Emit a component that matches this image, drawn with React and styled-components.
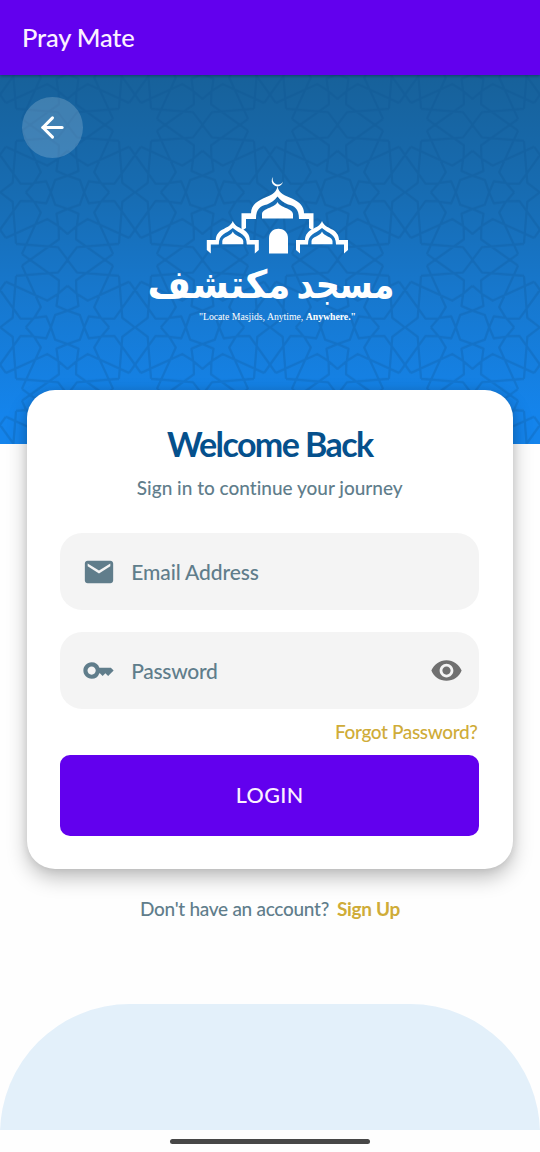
import React from "react";
import styled, { createGlobalStyle } from "styled-components";
import { MdEmail, MdKey, MdVisibility } from "react-icons/md";
import { ArrowLeft } from "lucide-react";

const GlobalStyle = createGlobalStyle`
  *, *::before, *::after { box-sizing: border-box; }
  body { margin: 0; background: #fefefe; }
  button, input { font: inherit; border: 0; padding: 0; background: none; }
`;

const Screen = styled.div`
  width: 540px;
  height: 1152px;
  display: flex;
  flex-direction: column;
  overflow: hidden;
  background: #fefefe;
  font-family: Lato, "Noto Sans", sans-serif;
  font-variant-ligatures: none;
`;

const AppBar = styled.header`
  height: 75px;
  flex: none;
  display: flex;
  align-items: center;
  padding: 0 0 2px 22px;
  background: #6200ee;
  color: #fbf0ff;
  box-shadow: 0 1px 3px rgba(0, 0, 0, 0.35);
  position: relative;
  z-index: 1;
`;

const Text = styled.span`
  font-size: ${(p) => p.$size}px;
  line-height: ${(p) => p.$line || p.$size}px;
  font-weight: ${(p) => p.$weight || 500};
  letter-spacing: ${(p) => p.$track || 0}px;
  color: ${(p) => p.$color || "inherit"};
  white-space: pre;
`;

const Hero = styled.section`
  height: 369px;
  flex: none;
  position: relative;
  display: flex;
  flex-direction: column;
  padding: 22px 22px 0;
  background: linear-gradient(#17619a 0%, #176cb2 32%, #1777cc 58%, #1484ec 92%, #1484ec 100%);
`;

const PatternLayer = styled.svg`
  position: absolute;
  inset: 0;
  width: 100%;
  height: 100%;
`;

const BackButton = styled.button`
  width: 61px;
  height: 61px;
  border-radius: 50%;
  display: grid;
  place-items: center;
  background: rgba(255, 255, 255, 0.18);
  color: #fff;
  position: relative;
`;

const Logo = styled.svg`
  width: 280px;
  height: 160px;
  flex: none;
  margin: 12px 0 0 109px;
  position: relative;
`;

const Card = styled.form`
  width: 485.5px;
  height: 479px;
  flex: none;
  margin: -54.5px 0 0 27px;
  padding: 35.5px 33px 0;
  border-radius: 28px;
  background: #fff;
  box-shadow: 0 9px 20px rgba(0, 0, 0, 0.25), 0 0 9px rgba(0, 0, 0, 0.1);
  display: flex;
  flex-direction: column;
  align-items: center;
  position: relative;
`;

const Headings = styled.div`
  height: 108px;
  flex: none;
  display: flex;
  flex-direction: column;
  align-items: center;
  gap: 13px;
`;

const Fields = styled.div`
  display: flex;
  flex-direction: column;
  gap: 22px;
`;

const Field = styled.label`
  width: 419px;
  height: 77px;
  flex: none;
  padding: 0 16px 0 22px;
  border-radius: 22px;
  background: #f4f4f4;
  color: #607d8b;
  display: flex;
  align-items: center;
`;

const FieldIcon = styled.span`
  width: 33px;
  margin-right: 16px;
  display: grid;
  place-items: center;
`;

const RevealIcon = styled.span`
  display: grid;
  margin-left: auto;
  color: #707070;
`;

const ForgotRow = styled.div`
  align-self: stretch;
  display: flex;
  justify-content: flex-end;
  padding-right: 2px;
  margin-top: 11px;
`;

const LoginButton = styled.button`
  width: 419px;
  height: 81px;
  margin-top: 11px;
  border-radius: 10px;
  background: #6200ee;
  color: #fbf0ff;
  display: grid;
  place-items: center;
  padding-bottom: 1px;
`;

const SignUpRow = styled.div`
  display: flex;
  justify-content: center;
  gap: 8px;
  margin-top: 28px;
`;

const Footer = styled.div`
  height: 126px;
  margin-top: auto;
  flex: none;
  overflow: hidden;
`;

const FooterShape = styled.div`
  height: 140px;
  border-radius: 130px 130px 0 0;
  background: #e3f0fa;
`;

const GestureBar = styled.div`
  height: 22px;
  flex: none;
  display: grid;
  place-items: center;
`;

const GestureHandle = styled.div`
  width: 200px;
  height: 5px;
  border-radius: 3px;
  background: #474747;
`;

// Girih tile geometry: a 405-unit square with a twelve-pointed rosette on each corner.
const polar = (r, deg) => [
  r * Math.cos((deg * Math.PI) / 180),
  r * Math.sin((deg * Math.PI) / 180),
];
const rotate = ([x, y], deg) => {
  const [c, s] = polar(1, deg);
  return [x * c - y * s, x * s + y * c];
};
const toPath = (points) =>
  "M" + points.map(([x, y]) => `${x.toFixed(1)} ${y.toFixed(1)}`).join("L");

function rosette(cx, cy) {
  const lines = [];
  for (let k = 0; k < 12; k++) {
    const shoulder = k % 3 === 0 ? [174, 38] : [184, 35];
    for (const side of [1, -1]) {
      const pts = [polar(68, 45 * side), [shoulder[0], shoulder[1] * side], [203, 0]];
      lines.push(
        toPath(
          pts.map((p) => {
            const [x, y] = rotate(p, k * 30);
            return [x + cx, y + cy];
          })
        )
      );
    }
  }
  return lines.join("");
}

function centre() {
  const base = [
    [[0, -125], [-28, -101], [-33, -64], [0, -50], [33, -64], [28, -101], [0, -125]],
    [[0, -50], [-37, -37], [-50, 0]],
  ];
  return [0, 90, 180, 270]
    .flatMap((a) =>
      base.map((line) =>
        toPath(line.map((p) => rotate(p, a).map((v) => v + 202.5)))
      )
    )
    .join("");
}

const GIRIH =
  [[0, 0], [405, 0], [0, 405], [405, 405]].map(([x, y]) => rosette(x, y)).join("") +
  centre();

function Girih() {
  return (
    <PatternLayer aria-hidden="true">
      <defs>
        <pattern
          id="girih"
          width="405"
          height="405"
          patternUnits="userSpaceOnUse"
          patternTransform="translate(0 49.8) scale(0.33333)"
        >
          <path d={GIRIH} fill="none" stroke="#0b4f8c" strokeWidth="7" strokeLinejoin="round" />
        </pattern>
      </defs>
      <rect width="100%" height="100%" fill="url(#girih)" opacity="0.23" />
    </PatternLayer>
  );
}

function SideDome({ x }) {
  return (
    <g transform={`translate(${x} 0)`}>
      <path d="M0 221C2 226 6 227 9 229C14 231 17 235 17 240H26V250L22 253.5V244.5H14C14 234 7 234 0 228C-7 234-14 234-14 244.5H-22V253.5L-26 250V240H-17C-17 235-14 231-9 229C-6 227-2 226 0 221Z" />
      <path d="M0 231.5C2 237 10 236 10.5 241V244.3H-10.5V241C-10 236-2 237 0 231.5Z" />
    </g>
  );
}

function MosqueLogo() {
  return (
    <Logo viewBox="131 170 280 160" fill="#fff">
      <path d="M273.2 176.8A5.7 5.7 0 1 0 283 181.5A5 5 0 0 1 273.2 176.8Z" />
      <path d="M277.5 186C278.5 194 286 196 292 198.5C300 202 304 207 304 213.3H313.5V231L309 228V219H299C299 208 294 206 288 204.5C284 203 280 200 277.5 196.5C275 200 271 203 267 204.5C261 206 256 208 256 219H246V228L241.5 231V213.3H251C251 207 255 202 263 198.5C269 196 276.5 194 277.5 186Z" />
      <path d="M277.5 202C280 208 292.5 208 293 214V218.5H262V214C262.5 208 275 208 277.5 202Z" />
      <path d="M269 253.5V238C269 225.5 288 225.5 288 238V253.5Z" />
      <SideDome x={322} />
      <SideDome x={232.8} />
      <g fontFamily='"DejaVu Sans", sans-serif' fontWeight="700" fontSize="39" textAnchor="middle">
        <text x="345.5" y="298" direction="rtl" textLength="98" lengthAdjust="spacingAndGlyphs">
          مسجد
        </text>
        <text x="219" y="298" direction="rtl" textLength="143" lengthAdjust="spacingAndGlyphs">
          مكتشف
        </text>
      </g>
      <text
        x="199"
        y="319.5"
        fontFamily='"Liberation Serif", serif'
        fontSize="10"
        textLength="157"
        lengthAdjust="spacingAndGlyphs"
      >
        "Locate Masjids, Anytime, <tspan fontWeight="700">Anywhere."</tspan>
      </text>
    </Logo>
  );
}

export default function App() {
  return (
    <Screen>
      <GlobalStyle />
      <AppBar>
        <Text $size={25.5} $line={30} $track={-0.2}>Pray Mate</Text>
      </AppBar>
      <Hero>
        <Girih />
        <BackButton type="button" aria-label="Back">
          <ArrowLeft size={33} strokeWidth={2.2} />
        </BackButton>
        <MosqueLogo />
      </Hero>
      <Card onSubmit={(e) => e.preventDefault()}>
        <Headings>
          <Text $size={34} $line={37} $weight={700} $track={-1.6} $color="#05508c">Welcome Back</Text>
          <Text $size={19} $line={26} $color="#607d8b">Sign in to continue your journey</Text>
        </Headings>
        <Fields>
          <Field>
            <FieldIcon><MdEmail size={34} /></FieldIcon>
            <Text $size={21} $line={26} $track={-0.1}>Email Address</Text>
          </Field>
          <Field>
            <FieldIcon><MdKey size={33} /></FieldIcon>
            <Text $size={21} $line={26} $track={-0.3}>Password</Text>
            <RevealIcon><MdVisibility size={33} /></RevealIcon>
          </Field>
        </Fields>
        <ForgotRow>
          <Text $size={19} $line={24} $track={-0.36} $color="#cfac38">Forgot Password?</Text>
        </ForgotRow>
        <LoginButton type="submit">
          <Text $size={21.5} $line={26} $track={0.4}>LOGIN</Text>
        </LoginButton>
      </Card>
      <SignUpRow>
        <Text $size={19} $line={24} $track={-0.28} $color="#607d8b">Don't have an account?</Text>
        <Text $size={19} $line={24} $weight={700} $track={-0.3} $color="#cfac38">Sign Up</Text>
      </SignUpRow>
      <Footer><FooterShape /></Footer>
      <GestureBar><GestureHandle /></GestureBar>
    </Screen>
  );
}
